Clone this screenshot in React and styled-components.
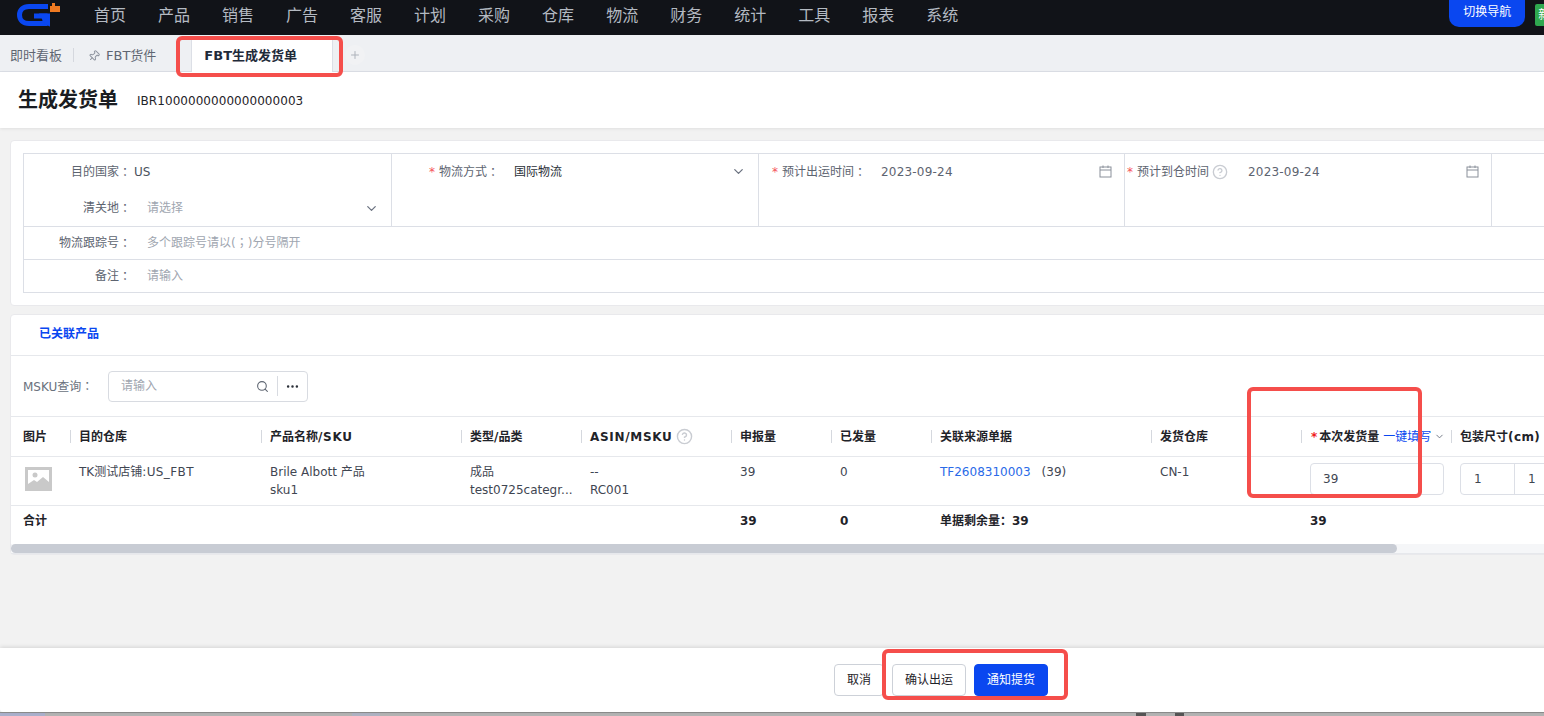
import React from 'react';
import styled, { createGlobalStyle } from 'styled-components';
import { ChevronDown, Pin, Plus, Search, Ellipsis, CircleHelp } from 'lucide-react';

const Global = createGlobalStyle`
  html, body { margin: 0; padding: 0; height: 100%; overflow: hidden; background: #f2f2f2; }
  * { box-sizing: border-box; }
  body {
    font-family: "DejaVu Sans", "Noto Sans CJK SC", sans-serif;
    font-size: 12px;
    line-height: 18px;
    color: #3f4652;
    text-spacing-trim: space-all;
  }
`;

const Viewport = styled.div`
  position: relative;
  width: 1544px;
  height: 716px;
  overflow: hidden;
`;
const Page = styled.div`
  width: 1882px;
  height: 716px;
  display: flex;
  flex-direction: column;
`;
const TopBar = styled.header`
  height: 35px;
  flex: none;
  background: #111318;
  display: flex;
  align-items: flex-start;
  padding-left: 17px;
`;
const LogoBox = styled.svg`
  flex: none;
  width: 44px;
  height: 26px;
  margin-top: 2px;
`;
const Nav = styled.nav`
  display: flex;
  gap: 32px;
  margin-left: 33px;
  height: 31px;
  align-items: center;
`;
const NavItem = styled.span`
  font-size: 16px;
  line-height: 22px;
  color: #b4bac2;
`;
const SwitchButton = styled.button`
  flex: none;
  margin-left: 491px;
  width: 76px;
  height: 27px;
  border: 0;
  border-radius: 0 0 10px 10px;
  background: #0a47f0;
  color: #fff;
  font: inherit;
  padding: 0 0 4px;
`;
const NewBadge = styled.span`
  flex: none;
  margin: 4px 0 0 10px;
  width: 24px;
  height: 22px;
  line-height: 22px;
  background: #2fa84f;
  color: #fff;
  border-radius: 2px;
  padding-left: 3px;
`;
const TabBar = styled.div`
  height: 37px;
  flex: none;
  display: flex;
  align-items: flex-end;
  background: #eef0f3;
  border-bottom: 1px solid #dcdfe6;
  padding-left: 10px;
`;
const TabText = styled.span`
  display: flex;
  align-items: center;
  gap: 6px;
  height: 32px;
  padding-top: 1px;
  font-size: 13px;
  color: #5f6672;
`;
const TabDivider = styled.span`
  width: 1px;
  height: 14px;
  margin: 0 14px 9px 11px;
  background: #d5d8de;
`;
const PinIcon = styled(Pin)`
  transform: rotate(45deg);
  color: #8f95a0;
`;
const ActiveTab = styled.div`
  display: flex;
  align-items: center;
  width: 142px;
  height: 32px;
  margin-left: 35px;
  margin-bottom: -1px;
  padding-left: 12px;
  background: #fff;
  border-left: 1px solid #dcdfe6;
  border-right: 1px solid #dcdfe6;
  font-size: 13px;
  font-weight: 700;
  color: #1f2a3a;
`;
const AddTab = styled.span`
  display: flex;
  align-items: center;
  justify-content: center;
  width: 20px;
  height: 20px;
  margin: 0 0 6px 12px;
  border-radius: 50%;
  background: #f1f2f4;
  color: #aeb3bb;
`;
const PageHeader = styled.div`
  height: 56px;
  flex: none;
  background: #fff;
  display: flex;
  align-items: center;
  padding-left: 18px;
  box-shadow: 0 1px 3px rgba(0, 0, 0, 0.08);
`;
const Title = styled.h1`
  margin: 0;
  font-size: 20px;
  line-height: 28px;
  font-weight: 700;
  color: #1a1d22;
`;
const DocNo = styled.span`
  margin-left: 19px;
  color: #1f2329;
  margin-top: 2px;
  letter-spacing: 0.05px;
`;
const Main = styled.main`
  flex: 1;
  min-height: 0;
  padding: 12px 0 0 10px;
  display: flex;
  flex-direction: column;
  gap: 8px;
`;
const Card = styled.section`
  background: #fff;
  border: 1px solid #e9e9ec;
  border-radius: 4px;
  padding: ${p => p.$pad || '0'};
`;
const Form = styled.div`
  border: 1px solid #dcdfe6;
`;
const FormRow = styled.div`
  display: flex;
  height: ${p => p.$h}px;
  & + & { border-top: 1px solid #dcdfe6; }
`;
const FormCell = styled.div`
  flex: none;
  width: ${p => p.$w}px;
  border-right: ${p => p.$last ? '0' : '1px solid #dcdfe6'};
`;
const FormLine = styled.div`
  height: ${p => p.$h}px;
  display: flex;
  align-items: center;
  padding-right: 12px;
`;
const FieldLabel = styled.label`
  flex: none;
  width: 107px;
  color: #5d6470;
  white-space: nowrap;
  display: flex;
  justify-content: flex-end;
  align-items: center;
`;
const Colon = styled.span`
  font-family: "Noto Sans CJK TC", sans-serif;
`;
const Star = styled.i`
  font-style: normal;
  color: #f5535a;
  margin-right: 4px;
`;
const StaticValue = styled.span`
  margin-left: 3px;
  color: #4a515d;
`;
const Value = styled.span`
  flex: 1;
  margin-left: ${p => p.$ml ?? 15}px;
  letter-spacing: ${p => p.$date ? '0.2px' : '0'};
  color: ${p => p.$placeholder ? '#a0a6b0' : p.$strong ? '#2a2f38' : '#5d6470'};
`;
const Chevron = styled(ChevronDown)`
  flex: none;
  color: #6b7280;
`;
const CalIcon = styled.svg`
  flex: none;
  width: 13px;
  height: 13px;
  color: #8a909a;
`;
const Help = styled(CircleHelp)`
  flex: none;
  margin-left: 3px;
  margin-right: ${p => p.$end || 0}px;
  color: #c9ccd2;
`;
const SectionTabs = styled.div`
  height: 41px;
  display: flex;
  align-items: center;
  padding: 0 0 2px 28px;
  border-bottom: 1px solid #e6e8ec;
  color: #0a47f0;
  font-weight: 700;
`;
const FilterBar = styled.div`
  height: 60px;
  display: flex;
  align-items: center;
  padding-left: 12px;
`;
const FilterLabel = styled.span`
  width: 85px;
  color: #6a717c;
`;
const SearchBox = styled.div`
  width: 200px;
  height: 31px;
  display: flex;
  align-items: center;
  border: 1px solid #d8dbe1;
  border-radius: 4px;
  padding-left: 12px;
  color: #a0a6b0;
`;
const SearchText = styled.span`
  flex: 1;
`;
const SearchIcon = styled(Search)`
  color: #5f6672;
`;
const BoxDivider = styled.span`
  width: 1px;
  height: 20px;
  margin: 0 7px 0 8px;
  background: #d8dbe1;
`;
const Dots = styled(Ellipsis)`
  color: #2a2f38;
  margin-right: 7px;
`;
const COLS = '59px 191px 200px 120px 150px 100px 100px 220px 150px 150px 300px';
const TableRow = styled.div`
  display: grid;
  grid-template-columns: ${COLS};
  border-top: 1px solid #e6e8ec;
  height: ${p => p.$h}px;
`;
const HeadCell = styled.div`
  display: flex;
  align-items: center;
  font-weight: 700;
  color: #1f2329;
  white-space: nowrap;
  padding-left: ${p => p.$first ? '12px' : '0'};
  ${p => !p.$first && `
    &::before {
      content: '';
      flex: none;
      width: 1px;
      height: 13px;
      margin-right: 8px;
      background: #d5d8de;
    }
  `}
`;
const Latin = styled.span`
  letter-spacing: ${p => p.$ls || 0.7}px;
`;
const RedStar = styled.i`
  font-style: normal;
  color: #f01c1c;
  margin: 0 2px 0 1px;
`;
const FillAll = styled.span`
  margin-left: 4px;
  font-weight: 400;
  color: #0a47f0;
`;
const HeadChevron = styled(ChevronDown)`
  margin-left: 3px;
  color: #6b7280;
`;
const Cell = styled.div`
  padding: 6px 0 0 ${p => p.$pad ?? 9}px;
  color: #3f4652;
  white-space: nowrap;
`;
const Link = styled.a`
  color: #2a6ae8;
  margin-right: 11px;
`;
const NoImage = styled.svg`
  display: block;
  width: 27px;
  height: 24px;
  margin-top: 4px;
`;
const NumberInput = styled.div`
  width: 134px;
  height: 32px;
  border: 1px solid #dcdfe6;
  border-radius: 4px;
  padding-left: 12px;
  line-height: 30px;
  color: #3f4652;
`;
const SizeGroup = styled.div`
  display: flex;
  width: 200px;
  height: 32px;
  border: 1px solid #dcdfe6;
  border-radius: 4px;
`;
const SizePart = styled.span`
  flex: none;
  width: 54px;
  padding-left: 13px;
  line-height: 30px;
  border-right: 1px solid #dcdfe6;
`;
const TotalCell = styled.div`
  padding: 6px 0 0 ${p => p.$pad ?? 9}px;
  font-weight: 700;
  color: #1f2329;
`;
const ScrollTrack = styled.div`
  height: 10px;
  background: #f5f6f8;
  border-bottom: 1px solid #e6e8ec;
`;
const ScrollThumb = styled.div`
  width: 1386px;
  height: 9px;
  border-radius: 5px;
  background: #c8ccd4;
`;
const Footer = styled.footer`
  height: 64px;
  flex: none;
  display: flex;
  align-items: center;
  gap: 8px;
  padding-left: 834px;
  background: #fff;
  border-radius: 0 0 0 3px;
  box-shadow: 0 -1px 4px rgba(0, 0, 0, 0.12);
  position: relative;
`;
const Button = styled.button`
  height: 32px;
  padding: 0 12px;
  border-radius: 4px;
  border: 1px solid ${p => p.$primary ? '#0a47f0' : '#cdd1d8'};
  background: ${p => p.$primary ? '#0a47f0' : '#fff'};
  color: ${p => p.$primary ? '#fff' : '#1f2329'};
  font: inherit;
`;
const Backdrop = styled.div`
  height: 4px;
  flex: none;
  display: flex;
  background: #b3b3b3;
  border-top: 1px solid #8e8e8e;
`;
const BackdropSpot = styled.span`
  flex: none;
  width: ${p => p.$w}px;
  margin-left: ${p => p.$at}px;
  background: ${p => p.$c};
`;
const Marker = styled.div`
  position: absolute;
  left: ${p => p.$x}px;
  top: ${p => p.$y}px;
  width: ${p => p.$w}px;
  height: ${p => p.$h}px;
  border: 4px solid #f54e4b;
  border-radius: 6px;
  pointer-events: none;
`;

const Calendar = () => (
  <CalIcon viewBox="0 0 13 13" fill="none" stroke="currentColor" strokeWidth="1">
    <rect x="1" y="2" width="11" height="10" />
    <path d="M1 5h11M4 0.5v2.5M9 0.5v2.5" />
  </CalIcon>
);

const NAV = ['首页', '产品', '销售', '广告', '客服', '计划', '采购', '仓库', '物流', '财务', '统计', '工具', '报表', '系统'];

export default function App() {
  return (
    <Viewport>
      <Global />
      <Page>
        <TopBar>
          <LogoBox viewBox="0 0 44 26">
            <path d="M31 4.5H12C6 4.5 2.5 8 2.5 13S6 21.5 12 21.5H28V14H17" fill="none" stroke="#0a47f0" strokeWidth="5" />
            <path d="M22 11.5h11v13l-5-2z" fill="#0a47f0" />
            <path d="M35 1h3v3h5v6H33V4h2z" fill="#ee7a22" />
          </LogoBox>
          <Nav>{NAV.map(n => <NavItem key={n}>{n}</NavItem>)}</Nav>
          <SwitchButton>切换导航</SwitchButton>
          <NewBadge>新</NewBadge>
        </TopBar>
        <TabBar>
          <TabText>即时看板</TabText>
          <TabDivider />
          <TabText><PinIcon size={12} />FBT货件</TabText>
          <ActiveTab>FBT生成发货单</ActiveTab>
          <AddTab><Plus size={12} strokeWidth={2} /></AddTab>
        </TabBar>
        <PageHeader>
          <Title>生成发货单</Title>
          <DocNo>IBR1000000000000000003</DocNo>
        </PageHeader>
        <Main>
          <Card $pad="12px">
            <Form>
              <FormRow $h={72}>
                <FormCell $w={368}>
                  <FormLine $h={35}>
                    <FieldLabel>目的国家<Colon>：</Colon></FieldLabel>
                    <StaticValue>US</StaticValue>
                  </FormLine>
                  <FormLine $h={38}>
                    <FieldLabel>清关地<Colon>：</Colon></FieldLabel>
                    <Value $placeholder $ml={16}>请选择</Value>
                    <Chevron size={15} />
                  </FormLine>
                </FormCell>
                <FormCell $w={367}>
                  <FormLine $h={35}>
                    <FieldLabel><Star>*</Star>物流方式<Colon>：</Colon></FieldLabel>
                    <Value $strong>国际物流</Value>
                    <Chevron size={15} />
                  </FormLine>
                </FormCell>
                <FormCell $w={366}>
                  <FormLine $h={35}>
                    <FieldLabel><Star>*</Star>预计出运时间<Colon>：</Colon></FieldLabel>
                    <Value $date>2023-09-24</Value>
                    <Calendar />
                  </FormLine>
                </FormCell>
                <FormCell $w={367}>
                  <FormLine $h={35}>
                    <FieldLabel><Star>*</Star>预计到仓时间<Help size={16} $end={4} /></FieldLabel>
                    <Value $date $ml={16}>2023-09-24</Value>
                    <Calendar />
                  </FormLine>
                </FormCell>
                <FormCell $w={360} $last />
              </FormRow>
              <FormRow $h={33}>
                <FormLine $h={31}>
                  <FieldLabel>物流跟踪号<Colon>：</Colon></FieldLabel>
                  <Value $placeholder $ml={16}>多个跟踪号请以(<Colon>；</Colon>)分号隔开</Value>
                </FormLine>
              </FormRow>
              <FormRow $h={33}>
                <FormLine $h={31}>
                  <FieldLabel>备注<Colon>：</Colon></FieldLabel>
                  <Value $placeholder $ml={16}>请输入</Value>
                </FormLine>
              </FormRow>
            </Form>
          </Card>
          <Card>
            <SectionTabs>已关联产品</SectionTabs>
            <FilterBar>
              <FilterLabel>MSKU查询<Colon>：</Colon></FilterLabel>
              <SearchBox>
                <SearchText>请输入</SearchText>
                <SearchIcon size={13} />
                <BoxDivider />
                <Dots size={15} />
              </SearchBox>
            </FilterBar>
            <TableRow $h={40}>
              <HeadCell $first>图片</HeadCell>
              <HeadCell>目的仓库</HeadCell>
              <HeadCell>产品名称<Latin>/SKU</Latin></HeadCell>
              <HeadCell>类型/品类</HeadCell>
              <HeadCell><Latin>ASIN/MSKU</Latin><Help size={17} /></HeadCell>
              <HeadCell>申报量</HeadCell>
              <HeadCell>已发量</HeadCell>
              <HeadCell>关联来源单据</HeadCell>
              <HeadCell>发货仓库</HeadCell>
              <HeadCell><RedStar>*</RedStar>本次发货量<FillAll>一键填写</FillAll><HeadChevron size={11} /></HeadCell>
              <HeadCell>包装尺寸<Latin $ls={0.4}>(cm)</Latin></HeadCell>
            </TableRow>
            <TableRow $h={49}>
              <Cell $pad={14}>
                <NoImage viewBox="0 0 27 24">
                  <rect width="27" height="24" fill="#c9c9c9" />
                  <rect x="3" y="3" width="21" height="16" fill="#fff" />
                  <circle cx="10" cy="8" r="2.5" fill="#c9c9c9" />
                  <path d="M3 17l6-4 3 2 6-5 6 5v4H3z" fill="#c9c9c9" />
                </NoImage>
              </Cell>
              <Cell>TK测试店铺<Latin $ls={0.4}>:US_FBT</Latin></Cell>
              <Cell>Brile Albott 产品<br />sku1</Cell>
              <Cell>成品<br />test0725categr...</Cell>
              <Cell>--<br />RC001</Cell>
              <Cell>39</Cell>
              <Cell>0</Cell>
              <Cell><Link>TF2608310003</Link>(39)</Cell>
              <Cell>CN-1</Cell>
              <Cell><NumberInput>39</NumberInput></Cell>
              <Cell><SizeGroup><SizePart>1</SizePart><SizePart>1</SizePart></SizeGroup></Cell>
            </TableRow>
            <TableRow $h={39}>
              <TotalCell $pad={12}>合计</TotalCell>
              <TotalCell />
              <TotalCell />
              <TotalCell />
              <TotalCell />
              <TotalCell>39</TotalCell>
              <TotalCell>0</TotalCell>
              <TotalCell>单据剩余量：39</TotalCell>
              <TotalCell />
              <TotalCell>39</TotalCell>
              <TotalCell />
            </TableRow>
            <ScrollTrack><ScrollThumb /></ScrollTrack>
          </Card>
        </Main>
        <Footer>
          <Button>取消</Button>
          <Button>确认出运</Button>
          <Button $primary>通知提货</Button>
        </Footer>
        <Backdrop>
          <BackdropSpot $at={0} $w={45} $c="#aab0cc" />
          <BackdropSpot $at={307} $w={28} $c="#aeb2c2" />
          <BackdropSpot $at={756} $w={10} $c="#555" />
          <BackdropSpot $at={29} $w={9} $c="#555" />
        </Backdrop>
      </Page>
      <Marker $x={176} $y={36} $w={167} $h={41} />
      <Marker $x={1247} $y={387} $w={175} $h={111} />
      <Marker $x={882} $y={649} $w={186} $h={51} />
    </Viewport>
  );
}
